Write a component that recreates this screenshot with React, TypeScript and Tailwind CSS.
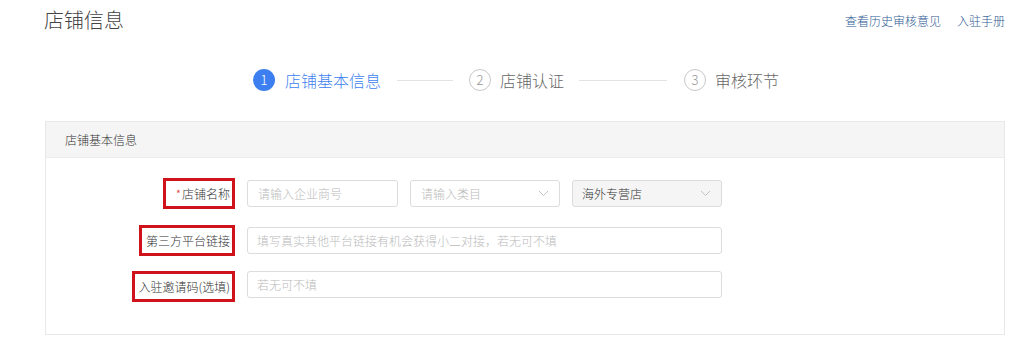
import React from "react"

function Chevron() {
  return (
    <svg width="11" height="7" viewBox="0 0 11 7" fill="none" className="shrink-0">
      <polyline points="1,1 5.5,5.5 10,1" stroke="#c4c4c4" strokeWidth="1" />
    </svg>
  )
}

function Step({ n, label, active }: { n: number; label: string; active?: boolean }) {
  return (
    <div className="flex items-center">
      <div
        className={
          active
            ? "w-[22px] h-[22px] rounded-full bg-[#3d7ff0] text-white text-[13px] flex items-center justify-center"
            : "w-[22px] h-[22px] rounded-full border border-[#c8c8c8] text-[#999] text-[13px] flex items-center justify-center"
        }
      >
        {n}
      </div>
      <span className={active ? "ml-[10px] text-[16px] text-[#3d7ff0]" : "ml-[9px] text-[16px] text-[#666]"}>
        {label}
      </span>
    </div>
  )
}

function Label({ children, className }: { children: React.ReactNode; className: string }) {
  return (
    <div className="w-[189px] flex justify-end shrink-0">
      <div
        className={
          "h-[31px] flex items-center border-[3px] border-[#d0121b] text-[12px] text-[#333] " + className
        }
      >
        {children}
      </div>
    </div>
  )
}

export default function App() {
  return (
    <div
      className="w-[1019px] h-[346px] bg-white overflow-hidden font-light"
      style={{ fontFamily: '"Noto Sans CJK SC", "Noto Sans", sans-serif' }}
    >
      <div className="flex items-start justify-between pl-[44px] pr-[14px] pt-[6px]">
        <h1 className="text-[20px] leading-[28px] text-[#444]">店铺信息</h1>
        <div className="flex gap-[16px] pt-[6px] text-[12px] text-[#2f5b94]">
          <span>查看历史审核意见</span>
          <span>入驻手册</span>
        </div>
      </div>

      <div className="flex items-center pl-[253px] mt-[34px]">
        <Step n={1} label="店铺基本信息" active />
        <div className="w-[56px] h-px bg-[#e3e3e3] mx-[16px]" />
        <Step n={2} label="店铺认证" />
        <div className="w-[88px] h-px bg-[#e3e3e3] ml-[15px] mr-[17px]" />
        <Step n={3} label="审核环节" />
      </div>

      <div className="ml-[45px] mt-[29px] w-[960px] border border-[#e8e8e8]">
        <div className="h-[36px] bg-[#f5f5f5] border-b border-[#ececec] pl-[19px] flex items-center text-[12px] text-[#333]">
          店铺基本信息
        </div>
        <div className="pt-[22px] pb-[36px]">
          <div className="flex items-center h-[27px]">
            <Label className="pl-[10px] pr-[2px]">
              <span className="text-[#e4393c] mr-[1px]">*</span>店铺名称
            </Label>
            <div className="flex gap-[12px] ml-[12px]">
              <input
                readOnly
                placeholder="请输入企业商号"
                className="w-[151px] h-[27px] rounded-[3px] border border-[#dcdcdc] px-[10px] text-[12px] outline-none placeholder:text-[#bbb]"
              />
              <div className="w-[150px] h-[27px] rounded-[3px] border border-[#dcdcdc] pl-[10px] pr-[10px] flex items-center justify-between text-[12px] text-[#bbb]">
                <span>请输入类目</span>
                <Chevron />
              </div>
              <div className="w-[150px] h-[27px] rounded-[3px] border border-[#dcdcdc] bg-[#f5f5f5] pl-[9px] pr-[10px] flex items-center justify-between text-[12px] text-[#333]">
                <span>海外专营店</span>
                <Chevron />
              </div>
            </div>
          </div>

          <div className="flex items-center h-[27px] mt-[20px]">
            <Label className="pl-[4px] pr-[2px]">第三方平台链接</Label>
            <input
              readOnly
              placeholder="填写真实其他平台链接有机会获得小二对接，若无可不填"
              className="ml-[12px] w-[475px] h-[27px] rounded-[3px] border border-[#dcdcdc] px-[9px] text-[12px] outline-none placeholder:text-[#bbb]"
            />
          </div>

          <div className="flex items-center h-[27px] mt-[17px]">
            <Label className="pl-[3px] pr-[2px] translate-y-[2px]">入驻邀请码(选填)</Label>
            <input
              readOnly
              placeholder="若无可不填"
              className="ml-[12px] w-[475px] h-[27px] rounded-[3px] border border-[#dcdcdc] px-[9px] text-[12px] outline-none placeholder:text-[#bbb]"
            />
          </div>
        </div>
      </div>
    </div>
  )
}
